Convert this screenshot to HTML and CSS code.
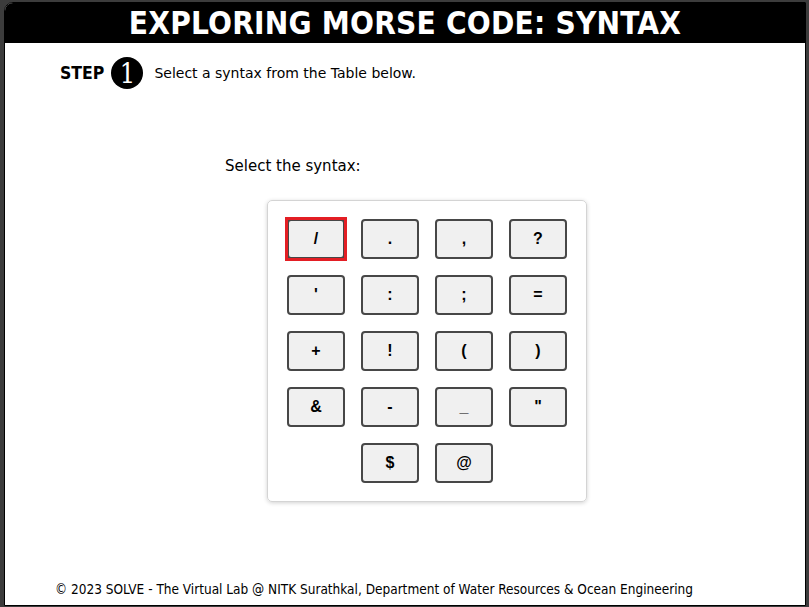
FILE: index.html
```html
<!DOCTYPE html>
<html>
<head>
<meta charset="utf-8">
<link rel="stylesheet" href="styles.css">
</head>
<body>
<div class="frame">
  <div class="page">
    <header class="title">EXPLORING MORSE CODE: SYNTAX</header>
    <div class="step">
      <span class="step-label">STEP</span>
      <span class="step-num">1</span>
      <span class="step-text">Select a syntax from the Table below.</span>
    </div>
    <div class="content">
      <p class="prompt">Select the syntax:</p>
      <div class="panel">
        <button class="key selected">/</button>
        <button class="key">.</button>
        <button class="key">,</button>
        <button class="key">?</button>
        <button class="key">'</button>
        <button class="key">:</button>
        <button class="key">;</button>
        <button class="key">=</button>
        <button class="key">+</button>
        <button class="key">!</button>
        <button class="key">(</button>
        <button class="key">)</button>
        <button class="key">&amp;</button>
        <button class="key">-</button>
        <button class="key">_</button>
        <button class="key">"</button>
        <button class="key">$</button>
        <button class="key">@</button>
      </div>
    </div>
    <footer class="footer">© 2023 SOLVE - The Virtual Lab @ NITK Surathkal, Department of Water Resources &amp; Ocean Engineering</footer>
  </div>
</div>
</body>
</html>
```
FILE: styles.css
```css
html, body {
  margin: 0;
  padding: 0;
  background: #ffffff;
}
.frame {
  width: 805px;
  height: 605px;
  border-left: 4px solid #3c3c3c;
  border-top: 2px solid #3c3c3c;
  background: #3c3c3c;
}
.page {
  box-sizing: border-box;
  width: 802px;
  height: 604px;
  background: #fff;
  border: 1px solid #000;
  border-top-left-radius: 9px;
  overflow: hidden;
  display: flex;
  flex-direction: column;
}
.title {
  background: #000;
  color: #fff;
  height: 40px;
  line-height: 40px;
  text-align: center;
  font-family: "DejaVu Sans Condensed", "DejaVu Sans", sans-serif;
  font-stretch: condensed;
  font-weight: bold;
  font-size: 31.3px;
  letter-spacing: 0.2px;
}
.step {
  display: flex;
  align-items: center;
  margin-top: 14px;
  padding-left: 55px;
  height: 32px;
}
.step-label {
  font-family: "DejaVu Sans Condensed", "DejaVu Sans", sans-serif;
  font-stretch: condensed;
  font-weight: bold;
  font-size: 17.5px;
  color: #000;
}
.step-num {
  width: 32px;
  height: 32px;
  border-radius: 50%;
  background: #000;
  color: #fff;
  display: flex;
  align-items: center;
  justify-content: center;
  font-family: "DejaVu Serif Condensed", "DejaVu Serif", serif;
  font-size: 27px;
  margin-left: 7px;
}
.step-text {
  margin-left: 11px;
  font-family: "DejaVu Sans", sans-serif;
  font-size: 14px;
  color: #000;
}
.content {
  padding-left: 220px;
  flex: 1;
}
.prompt {
  margin: 68px 0 0 0;
  font-family: "DejaVu Sans", sans-serif;
  font-size: 15px;
  color: #000;
}
.panel {
  margin: 25px 0 0 42px;
  width: 320px;
  box-sizing: border-box;
  padding: 18px 18px;
  border: 1px solid #d4d4d4;
  border-radius: 5px;
  box-shadow: 0 1px 4px rgba(0,0,0,0.18);
  display: flex;
  flex-wrap: wrap;
  justify-content: center;
  gap: 16px;
}
.key {
  position: relative;
  width: 58px;
  height: 40px;
  box-sizing: border-box;
  background: #f0f0f0;
  border: 2px solid #474747;
  border-radius: 4px;
  font-family: "Liberation Sans", Arial, sans-serif;
  font-weight: bold;
  font-size: 16px;
  color: #000;
  padding: 0;
}
.key.selected::before {
  content: "";
  position: absolute;
  left: -4px;
  top: -4px;
  right: -4px;
  bottom: -4px;
  border: 3px solid #e31e24;
}
.footer {
  font-family: "DejaVu Sans Condensed", "DejaVu Sans", sans-serif;
  font-stretch: condensed;
  font-size: 13.5px;
  color: #000;
  padding-left: 50px;
  padding-bottom: 8px;
}
```
